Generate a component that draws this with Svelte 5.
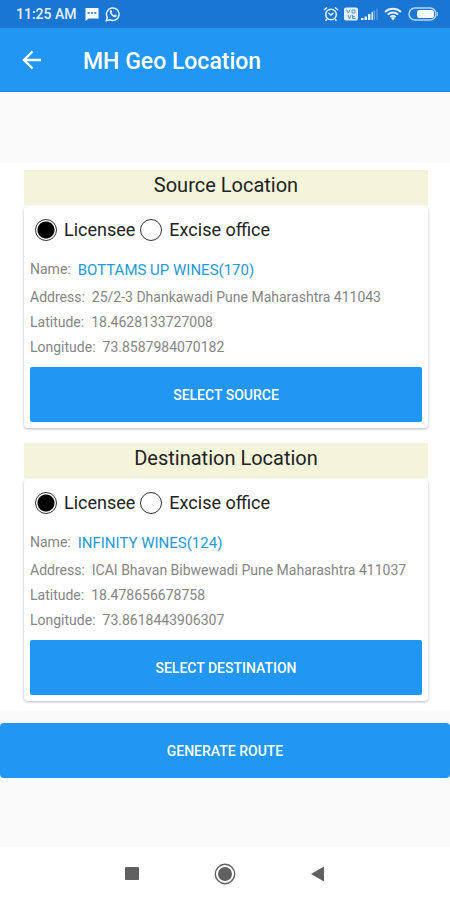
<script>
  const places = $state([
    {
      id: 'source',
      title: 'Source Location',
      kind: 'licensee',
      name: 'BOTTAMS UP WINES(170)',
      address: '25/2-3 Dhankawadi Pune Maharashtra 411043',
      latitude: '18.4628133727008',
      longitude: '73.8587984070182',
      action: 'SELECT SOURCE'
    },
    {
      id: 'destination',
      title: 'Destination Location',
      kind: 'licensee',
      name: 'INFINITY WINES(124)',
      address: 'ICAI Bhavan Bibwewadi Pune Maharashtra 411037',
      latitude: '18.478656678758',
      longitude: '73.8618443906307',
      action: 'SELECT DESTINATION'
    }
  ]);
</script>

<div class="screen">
  <div class="status">
    <span class="time">11:25 AM</span>
    <svg width="16" height="16" viewBox="0 0 16 16" aria-hidden="true">
      <path d="M1.500 2h13v10.500H4.500L1.500 15z" fill="#fff" />
      <path d="M3.500 7h2.300M6.800 7h2.300M10.100 7h2.300" stroke="#1976d2" stroke-width="1.500" />
    </svg>
    <svg class="chat" width="16" height="16" viewBox="0 0 16 16" aria-hidden="true">
      <path d="M1.300 14.700l1-3.400a6.300 6.300 0 1 1 2.400 2.400z" fill="none" stroke="#e6f1fc" stroke-width="1.500" />
      <path d="M5.300 4.300c.5-.5 1-.4 1.200 0l.6 1.400c.1.400-.5.900-.6 1.100.5 1.100 1.400 1.900 2.500 2.400.3-.1.800-.9 1.100-.8l1.500.8c.4.200.1 1.300-.5 1.700-2.700 1.300-7.600-3.300-5.800-6.600z" fill="#e6f1fc" />
    </svg>
    <span class="fill"></span>
    <svg width="16" height="16" viewBox="0 0 16 16" fill="none" stroke="#e6f1fc" aria-hidden="true">
      <circle cx="8" cy="8.500" r="5.300" stroke-width="1.500" />
      <path d="M1 4l3-2.500M15 4l-3-2.500M4 13l-1.500 1.700M12 13l1.500 1.700M5.500 7l2.500 2L10.500 7" stroke-width="1.500" />
    </svg>
    <svg class="volte" width="14" height="14" viewBox="0 0 14 14" aria-hidden="true">
      <rect width="14" height="13" y=".5" rx="2" fill="#e6f1fc" />
      <path d="M2.500 2.500L4.300 6 6 2.500M8 6V3h3v3zM4 8l1.500 4L7 8M8.500 8v3.500h3M8.500 9.700h2.500" fill="none" stroke="#4a93dc" />
    </svg>
    <svg width="17" height="14" viewBox="0 0 17 14" aria-hidden="true">
      <path d="M0 11h2.500v2H0zM3.500 9.500H6V13H3.500zM7 7h2.500v6H7zM10.500 5H12v8h-1.500z" fill="#e6f1fc" />
      <path d="M12.500 3.500h1.500V13h-1.500zM15.500 1.500h1V13h-1z" fill="#6aa6e3" />
    </svg>
    <svg class="wifi" width="18" height="14" viewBox="0 0 18 14" fill="none" stroke="#e6f1fc" aria-hidden="true">
      <path d="M1 5a11.500 11.500 0 0 1 16 0M3.700 7.600a7.700 7.700 0 0 1 10.600 0M6.300 10a4 4 0 0 1 5.400 0" stroke-width="1.800" />
      <path d="M7 11l2 2.500 2-2.500a3 3 0 0 0-4 0z" fill="#e6f1fc" stroke="none" />
    </svg>
    <svg class="battery" width="30" height="14" viewBox="0 0 30 14" aria-hidden="true">
      <rect x="1" y="1" width="27" height="12" rx="6" fill="none" stroke="#b9d7f5" stroke-width="1.500" />
      <rect x="9" y="3" width="17" height="8" rx="2.500" fill="#f4f9ff" />
      <path d="M29.300 5v4" stroke="#b9d7f5" />
    </svg>
  </div>

  <header>
    <button class="back" aria-label="Back">
      <svg width="20" height="20" viewBox="0 0 20 20" fill="none" stroke="#fff" stroke-width="2.400" aria-hidden="true">
        <path d="M19 10H2.500M10.500 1.500L2 10l8.500 8.500" />
      </svg>
    </button>
    <h1>MH Geo Location</h1>
  </header>

  <main>
    <div class="panel">
      {#each places as place (place.id)}
        <section>
          <h2>{place.title}</h2>
          <div class="card">
            <div class="choices" role="radiogroup" aria-label={place.title}>
              <label><input type="radio" name={place.id} value="licensee" bind:group={place.kind} />Licensee</label>
              <label><input type="radio" name={place.id} value="office" bind:group={place.kind} />Excise office</label>
            </div>
            <dl>
              <div class="name"><dt>Name:</dt><dd>{place.name}</dd></div>
              <div><dt>Address:</dt><dd>{place.address}</dd></div>
              <div><dt>Latitude:</dt><dd>{place.latitude}</dd></div>
              <div><dt>Longitude:</dt><dd>{place.longitude}</dd></div>
            </dl>
            <button class="action">{place.action}</button>
          </div>
        </section>
      {/each}
    </div>
    <button class="action route">GENERATE ROUTE</button>
  </main>

  <nav aria-label="System">
    <button aria-label="Recent apps">
      <svg width="22" height="22" viewBox="0 0 22 22" aria-hidden="true"><rect x="4" y="4" width="14" height="13" rx="1" fill="#606060" /></svg>
    </button>
    <button aria-label="Home">
      <svg width="22" height="22" viewBox="0 0 22 22" aria-hidden="true">
        <circle cx="11" cy="11" r="9.700" fill="none" stroke="#606060" stroke-width="1.400" />
        <circle cx="11" cy="11" r="7" fill="#606060" />
      </svg>
    </button>
    <button aria-label="Go back">
      <svg width="22" height="22" viewBox="0 0 22 22" aria-hidden="true"><path d="M17 3.500v15L4 11z" fill="#606060" /></svg>
    </button>
  </nav>
</div>

<style>
  .screen {
    min-height: 100vh;
    display: flex;
    flex-direction: column;
    background: #fafafa;
    color: #222;
    font-family: Roboto, "Liberation Sans", sans-serif;
  }
  button {
    border: 0;
    padding: 0;
    background: none;
    font-family: inherit;
    cursor: pointer;
  }
  svg {
    display: block;
    flex: none;
  }
  .status {
    height: 28px;
    display: flex;
    align-items: center;
    padding: 0 12px 0 16px;
    background: #1976d2;
    color: #e6f1fc;
  }
  .time {
    margin-right: 7px;
    font-size: 14px;
    line-height: 30px;
    font-weight: 500;
  }
  .chat {
    margin-left: 5px;
  }
  .fill {
    flex: 1;
  }
  .volte {
    margin: 0 3px 0 5px;
  }
  .wifi {
    margin: 0 6px;
  }
  header {
    height: 64px;
    box-sizing: border-box;
    display: flex;
    align-items: center;
    padding: 0 22px;
    border-bottom: 1px solid #1a86e0;
    background: #2196f3;
    color: #fff;
  }
  .back {
    width: 61px;
  }
  h1 {
    margin: 0;
    padding-top: 4px;
    font-size: 23px;
    line-height: 28px;
    font-weight: 500;
  }
  main {
    flex: 1;
    padding-top: 71px;
  }
  .panel {
    display: flex;
    flex-direction: column;
    gap: 15px;
    padding: 7px 22px 10px 24px;
    background: #fff;
  }
  h2 {
    margin: 0 0 1px;
    height: 35px;
    background: #f3f4da;
    font-size: 20px;
    line-height: 30px;
    font-weight: 400;
    text-align: center;
  }
  .card {
    padding: 8px 6px 6px;
    border-radius: 4px;
    background: #fff;
    box-shadow: 0 1px 3px rgba(0, 0, 0, 0.28);
  }
  .choices {
    display: flex;
    gap: 5px;
    padding-left: 5px;
    line-height: 32px;
    font-size: 18px;
  }
  label {
    display: flex;
    align-items: center;
    gap: 7px;
  }
  input {
    appearance: none;
    width: 22px;
    height: 22px;
    margin: 0;
    border: 1px solid #333;
    border-radius: 50%;
    background: #fff;
  }
  input:checked {
    background: radial-gradient(circle, #000 8px, #fff 9px);
  }
  dl {
    margin: 11px 0 7px;
    color: #858585;
    font-size: 14px;
    line-height: 25px;
  }
  dl div {
    display: flex;
    gap: 7px;
  }
  dt,
  dd {
    margin: 0;
  }
  .name {
    margin-bottom: 3px;
  }
  .name dd {
    padding-top: 1px;
    color: #2699d8;
    font-size: 15px;
    line-height: 24px;
  }
  .action {
    display: block;
    width: 100%;
    height: 55px;
    border-radius: 2px;
    background: #2196f3;
    color: #fff;
    font-size: 14px;
    font-weight: 500;
  }
  .route {
    margin-top: 12px;
    border-radius: 4px;
  }
  nav {
    height: 53px;
    display: flex;
    justify-content: center;
    align-items: center;
    gap: 71px;
    background: #fff;
  }
</style>
